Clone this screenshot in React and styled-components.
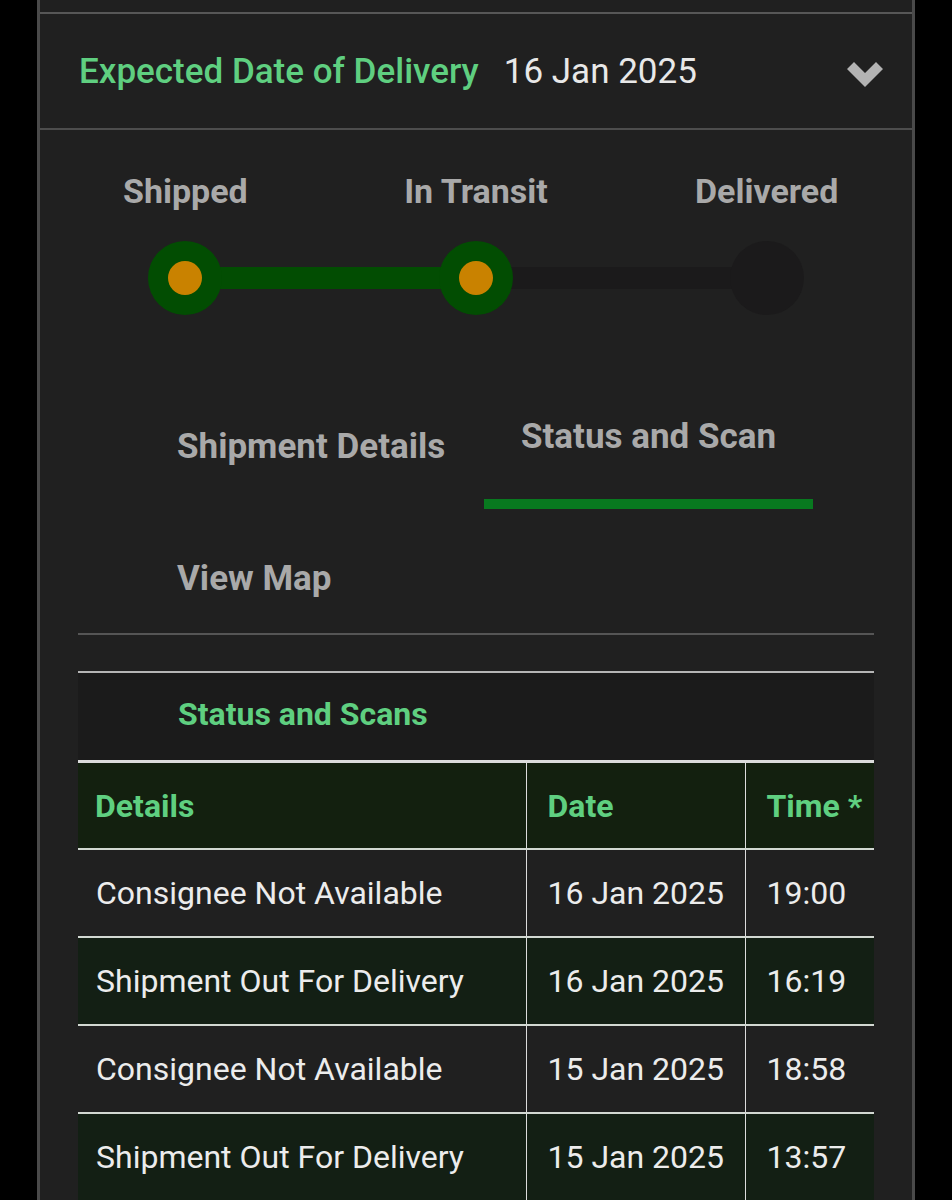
import React from 'react';
import styled, { createGlobalStyle } from 'styled-components';

const GlobalStyle = createGlobalStyle`
  html, body {
    margin: 0;
    padding: 0;
    background: #000;
    font-family: Roboto, "Liberation Sans", sans-serif;
  }
`;

const Panel = styled.div`
  margin: 0 37px;
  background: #202020;
  border-left: 3px solid #4a4a4a;
  border-right: 3px solid #4a4a4a;
  min-height: 1200px;
`;

const Stub = styled.div`
  height: 12px;
  border-bottom: 2px solid #575757;
`;

const Header = styled.div`
  height: 114px;
  display: flex;
  align-items: center;
  padding: 0 29px 0 39px;
  border-bottom: 2px solid #4d4d4d;
`;

const HeaderLabel = styled.span`
  color: #5fcf80;
  font-size: 35px;
  font-weight: 500;
  margin-right: 25px;
`;

const HeaderDate = styled.span`
  color: #e8e8e8;
  font-size: 35px;
  flex: 1;
`;

const ChevronBox = styled.span`
  display: flex;
  margin-top: 6px;
`;

const Chevron = () => (
  <ChevronBox>
    <svg width="36" height="25" viewBox="0 0 36 25">
      <polygon points="0,7 7,0 18,11 29,0 36,7 18,25" fill="#b3b3b3" />
    </svg>
  </ChevronBox>
);

const Stepper = styled.div`
  display: grid;
  grid-template-columns: repeat(3, 1fr);
  padding-top: 41px;
`;

const Step = styled.div`
  position: relative;
  display: flex;
  flex-direction: column;
  align-items: center;
  gap: 30px;
`;

const StepLabel = styled.div`
  color: #a9a9a9;
  font-size: 34px;
  font-weight: 700;
  line-height: 40px;
`;

const Track = styled.div`
  position: absolute;
  left: 50%;
  width: 100%;
  bottom: 26px;
  height: 22px;
  background: ${(p) => (p.$done ? '#024d02' : '#1b1a1b')};
`;

const Dot = styled.div`
  position: relative;
  z-index: 1;
  width: 74px;
  height: 74px;
  border-radius: 50%;
  background: ${(p) => (p.$done ? '#024d02' : '#1b1a1b')};
  display: flex;
  align-items: center;
  justify-content: center;

  &::after {
    content: '';
    display: ${(p) => (p.$done ? 'block' : 'none')};
    width: 34px;
    height: 34px;
    border-radius: 50%;
    background: #c98200;
  }
`;

const Body = styled.div`
  padding: 0 38px;
`;

const Tabs = styled.div`
  display: grid;
  grid-template-columns: 406px 329px;
  row-gap: 28px;
  margin-top: 90px;
  align-items: start;
`;

const Tab = styled.div`
  color: #a9a9a9;
  font-size: 35px;
  font-weight: 700;
  line-height: 40px;
  padding: ${(p) => (p.$active ? '12px 0 42px' : '22px 0 0 99px')};
  text-align: ${(p) => (p.$active ? 'center' : 'left')};
  border-bottom: ${(p) => (p.$active ? '10px solid #08791f' : 'none')};
  white-space: nowrap;
`;

const Divider = styled.hr`
  margin: ${(p) => p.$top}px 0 0;
  border: none;
  height: 2px;
  background: ${(p) => p.$color};
`;

const SectionTitle = styled.div`
  background: #1b1b1b;
  color: #5fcf80;
  font-size: 32px;
  font-weight: 700;
  line-height: 40px;
  padding: 21px 0 26px 100px;
`;

const Table = styled.table`
  width: 796px;
  table-layout: fixed;
  border-collapse: collapse;
  border-top: 3px solid #dcdcdc;
`;

const Row = styled.tr`
  background: ${(p) => (p.$shade ? '#131f14' : '#202020')};
  border-bottom: 2px solid #d2d8d2;
`;

const HeadCell = styled.th`
  height: 85px;
  padding: 0 0 0 21px;
  text-align: left;
  color: #5fcf80;
  font-size: 32px;
  font-weight: 700;
  background: #13200f;
  border-left: 1px solid #dcdcdc;
  white-space: nowrap;
  overflow: hidden;
  &:first-child {
    border-left: none;
    padding-left: 17px;
  }
`;

const Cell = styled.td`
  height: 86px;
  padding: 0 0 0 21px;
  color: #ececec;
  font-size: 32px;
  border-left: 1px solid #dcdcdc;
  white-space: nowrap;
  &:first-child {
    border-left: none;
    padding-left: 18px;
  }
`;

const steps = [
  { label: 'Shipped', done: true, track: true },
  { label: 'In Transit', done: true, track: false },
  { label: 'Delivered', done: false },
];

const scans = [
  ['Consignee Not Available', '16 Jan 2025', '19:00'],
  ['Shipment Out For Delivery', '16 Jan 2025', '16:19'],
  ['Consignee Not Available', '15 Jan 2025', '18:58'],
  ['Shipment Out For Delivery', '15 Jan 2025', '13:57'],
];

export default function App() {
  return (
    <>
      <GlobalStyle />
      <Panel>
        <Stub />
        <Header>
          <HeaderLabel>Expected Date of Delivery</HeaderLabel>
          <HeaderDate>16 Jan 2025</HeaderDate>
          <Chevron />
        </Header>

        <Stepper>
          {steps.map((s, i) => (
            <Step key={s.label}>
              <StepLabel>{s.label}</StepLabel>
              {i < steps.length - 1 && <Track $done={s.track} />}
              <Dot $done={s.done} />
            </Step>
          ))}
        </Stepper>

        <Body>
          <Tabs>
            <Tab>Shipment Details</Tab>
            <Tab $active>Status and Scan</Tab>
            <Tab>View Map</Tab>
          </Tabs>

          <Divider $top={34} $color="#555" />
          <Divider $top={36} $color="#b5b5b5" />
          <SectionTitle>Status and Scans</SectionTitle>

          <Table>
            <colgroup>
              <col style={{ width: 448 }} />
              <col style={{ width: 219 }} />
              <col style={{ width: 129 }} />
            </colgroup>
            <thead>
              <Row $shade>
                <HeadCell>Details</HeadCell>
                <HeadCell>Date</HeadCell>
                <HeadCell>Time *</HeadCell>
              </Row>
            </thead>
            <tbody>
              {scans.map((r, i) => (
                <Row key={i} $shade={i % 2 === 1}>
                  <Cell>{r[0]}</Cell>
                  <Cell>{r[1]}</Cell>
                  <Cell>{r[2]}</Cell>
                </Row>
              ))}
            </tbody>
          </Table>
        </Body>
      </Panel>
    </>
  );
}
